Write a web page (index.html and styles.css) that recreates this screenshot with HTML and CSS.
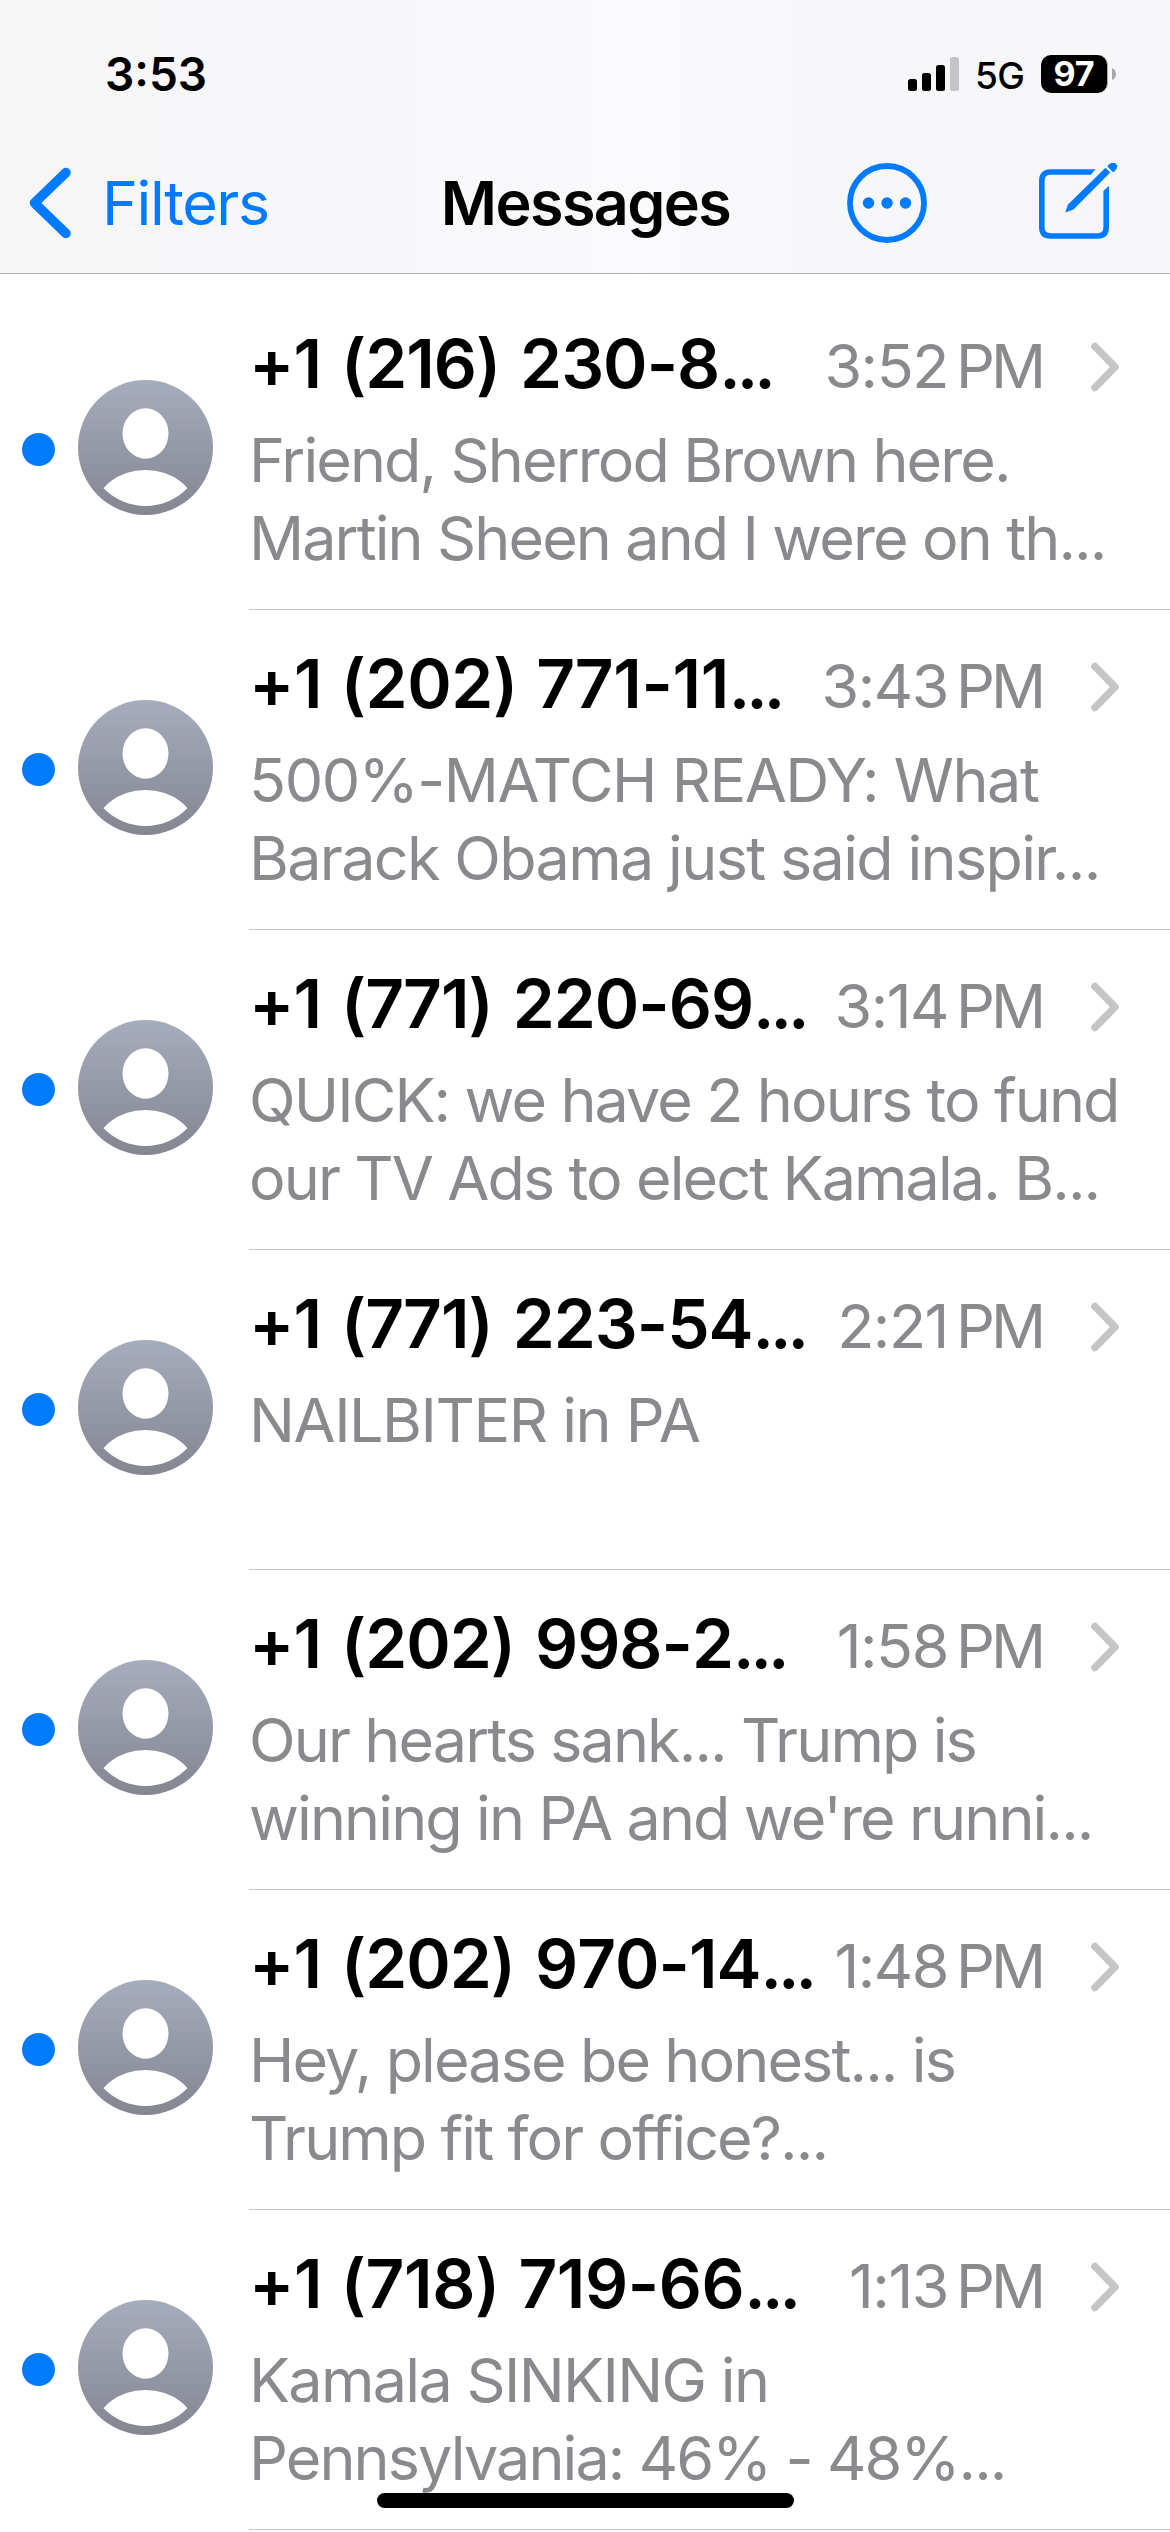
FILE: index.html
```html
<!DOCTYPE html>
<html lang="en">
<head>
  <meta charset="UTF-8" />
  <meta name="viewport" content="width=device-width, initial-scale=1.0">
  <title>Messages</title>
  <link rel="stylesheet" href="styles.css">
</head>
<body>
  <!-- shared shapes -->
  <svg class="defs" width="0" height="0">
    <defs>
      <linearGradient id="avatarFill" x1="0" y1="0" x2="0" y2="1">
        <stop offset="0" stop-color="#a6adbc" />
        <stop offset="1" stop-color="#848691" />
      </linearGradient>
      <clipPath id="avatarClip"><circle cx="67.5" cy="67.5" r="58.5" /></clipPath>
      <symbol id="avatar" viewBox="0 0 135 135">
        <circle cx="67.5" cy="67.5" r="67.5" fill="url(#avatarFill)" />
        <ellipse cx="67.5" cy="53.5" rx="23" ry="25.2" fill="#fff" />
        <ellipse cx="67.5" cy="130" rx="50" ry="40" fill="#fff" clip-path="url(#avatarClip)" />
      </symbol>
      <symbol id="chevron" viewBox="0 0 30 50">
        <path d="M5 4.5 L25 25 L5 45.5" fill="none" stroke="#c5c5c7" stroke-width="7.5" stroke-linecap="round" stroke-linejoin="round" />
      </symbol>
    </defs>
  </svg>

  <header class="header">
    <div class="status-bar">
      <span class="clock">3:53</span>
      <div class="status-right">
        <svg class="signal" width="51" height="34" viewBox="0 0 51 34">
          <rect x="0" y="22" width="9" height="12" rx="2.5" />
          <rect x="14" y="16" width="9" height="18" rx="2.5" />
          <rect x="28" y="8" width="9" height="26" rx="2.5" />
          <rect x="42" y="0" width="9" height="34" rx="2.5" fill="#c4c4c7" />
        </svg>
        <span class="network">5G</span>
        <div class="battery">97</div>
        <svg class="battery-tip" width="4" height="12" viewBox="0 0 4 12">
          <path d="M0 0 Q4 2 4 6 Q4 10 0 12 Z" fill="#a9a9ac" />
        </svg>
      </div>
    </div>
    <nav class="nav-bar">
      <a class="back">
        <svg width="42" height="72" viewBox="0 0 42 72">
          <path d="M37 5.5 L5.5 36 L37 66.5" fill="none" stroke="#007aff" stroke-width="9.5" stroke-linecap="round" stroke-linejoin="round" />
        </svg>
        <span>Filters</span>
      </a>
      <h1 class="title">Messages</h1>
      <div class="actions">
        <svg width="80" height="80" viewBox="0 0 80 80">
          <circle cx="40" cy="40" r="37" fill="none" stroke="#007aff" stroke-width="5.8" />
          <circle cx="21.5" cy="40" r="5.7" fill="#007aff" />
          <circle cx="40" cy="40" r="5.7" fill="#007aff" />
          <circle cx="58.5" cy="40" r="5.7" fill="#007aff" />
        </svg>
        <svg width="80" height="80" viewBox="0 0 80 80">
          <path d="M58 9 H11.5 Q2.8 9 2.8 17.7 V64.3 Q2.8 73 11.5 73 H58.5 Q67.2 73 67.2 64.3 V18" fill="none" stroke="#007aff" stroke-width="5.6" />
          <path d="M62 0 L80 14 L62 30 L48 16 Z" fill="#f7f7f9" />
          <path d="M26.2 49.5 L29 41.4 L66.5 4.8 L71.2 9.5 L34.5 46.4 Z" fill="#007aff" />
          <path d="M69.3 2.1 Q73.8 -2.2 77.2 0.9 Q79.8 4 75.8 8 L74 9.3 L68.3 3.3 Z" fill="#007aff" />
        </svg>
      </div>
    </nav>
  </header>

  <main class="list">
    <div class="row">
      <span class="unread"></span>
      <svg class="avatar"><use href="#avatar" /></svg>
      <div class="content">
        <div class="top">
          <span class="name">+1 (216) 230-8<span class="dots">...</span></span>
          <span class="time">3:52<span class="pm">PM</span></span>
          <svg class="chevron"><use href="#chevron" /></svg>
        </div>
        <p class="preview">Friend, Sherrod Brown here.<br>Martin Sheen and I were on th...</p>
      </div>
    </div>
    <div class="row">
      <span class="unread"></span>
      <svg class="avatar"><use href="#avatar" /></svg>
      <div class="content">
        <div class="top">
          <span class="name wide">+1 (202) 771-11<span class="dots">...</span></span>
          <span class="time">3:43<span class="pm">PM</span></span>
          <svg class="chevron"><use href="#chevron" /></svg>
        </div>
        <p class="preview"><span class="caps">500%-MATCH READY: What</span><br><span class="loose">Barack Obama just said inspir...</span></p>
      </div>
    </div>
    <div class="row">
      <span class="unread"></span>
      <svg class="avatar"><use href="#avatar" /></svg>
      <div class="content">
        <div class="top">
          <span class="name">+1 (771) 220-69<span class="dots">...</span></span>
          <span class="time">3:14<span class="pm">PM</span></span>
          <svg class="chevron"><use href="#chevron" /></svg>
        </div>
        <p class="preview">QUICK: we have 2 hours to fund<br>our TV Ads to elect Kamala. B...</p>
      </div>
    </div>
    <div class="row">
      <span class="unread"></span>
      <svg class="avatar"><use href="#avatar" /></svg>
      <div class="content">
        <div class="top">
          <span class="name">+1 (771) 223-54<span class="dots">...</span></span>
          <span class="time">2:21<span class="pm">PM</span></span>
          <svg class="chevron"><use href="#chevron" /></svg>
        </div>
        <p class="preview"><span class="caps">NAILBITER in PA</span></p>
      </div>
    </div>
    <div class="row">
      <span class="unread"></span>
      <svg class="avatar"><use href="#avatar" /></svg>
      <div class="content">
        <div class="top">
          <span class="name">+1 (202) 998-2<span class="dots">...</span></span>
          <span class="time">1:58<span class="pm">PM</span></span>
          <svg class="chevron"><use href="#chevron" /></svg>
        </div>
        <p class="preview">Our hearts sank... Trump is<br>winning in PA and we're runni...</p>
      </div>
    </div>
    <div class="row">
      <span class="unread"></span>
      <svg class="avatar"><use href="#avatar" /></svg>
      <div class="content">
        <div class="top">
          <span class="name">+1 (202) 970-14<span class="dots">...</span></span>
          <span class="time">1:48<span class="pm">PM</span></span>
          <svg class="chevron"><use href="#chevron" /></svg>
        </div>
        <p class="preview">Hey, please be honest... is<br>Trump fit for office?...</p>
      </div>
    </div>
    <div class="row">
      <span class="unread"></span>
      <svg class="avatar"><use href="#avatar" /></svg>
      <div class="content">
        <div class="top">
          <span class="name wide">+1 (718) 719-66<span class="dots">...</span></span>
          <span class="time">1:13<span class="pm">PM</span></span>
          <svg class="chevron"><use href="#chevron" /></svg>
        </div>
        <p class="preview"><span class="loose">Kamala SINKING in</span><br>Pennsylvania: 46% - 48%...</p>
      </div>
    </div>
  </main>
  <div class="home-indicator"></div>
</body>
</html>
```
FILE: styles.css
```css
* { box-sizing: border-box; }
body {
  margin: 0;
  width: 1170px;
  height: 2532px;
  overflow: hidden;
  background: #fff;
  color: #000;
  font-family: Inter, "Liberation Sans", sans-serif;
}
svg { display: block; flex: none; }
.defs { position: absolute; }

.header {
  height: 274px;
  background: linear-gradient(90deg, #f6f6f7, #f7f7fa 30%, #fafafc 55%, #f7f7f9 72%, #f6f6f8);
  border-bottom: 1px solid #b2b2b4;
}
.status-bar {
  height: 148px;
  padding: 0 54px 0 105px;
  display: flex;
  justify-content: space-between;
  align-items: center;
}
.clock {
  font-size: 46px;
  font-weight: 600;
}
.status-right { display: flex; align-items: center; }
.network {
  margin-left: 16px;
  width: 66px;
  font-size: 37px;
  font-weight: 500;
  letter-spacing: -0.5px;
  line-height: 38px;
  padding-top: 4px;
}
.battery {
  width: 67px;
  height: 38px;
  border-radius: 10px;
  background: #000;
  border-right: 1px solid #a9a9ac;
  color: #fff;
  font-size: 34px;
  font-weight: 700;
  line-height: 38px;
  text-align: center;
}
.battery-tip { margin-left: 4px; }

.nav-bar {
  height: 110px;
  padding: 0 51px 0 29px;
  display: grid;
  grid-template-columns: 1fr auto 1fr;
  align-items: center;
}
.back {
  display: flex;
  align-items: center;
  gap: 31px;
  color: #007aff;
  font-size: 61px;
  letter-spacing: -1.4px;
}
.title {
  margin: 0 0 0 23px;
  font-size: 61px;
  font-weight: 600;
  letter-spacing: -1.6px;
}
.actions {
  display: flex;
  justify-content: flex-end;
  gap: 112px;
}

.list { padding-top: 16px; }
.row {
  height: 320px;
  display: flex;
}
.unread {
  flex: none;
  width: 33px;
  height: 33px;
  margin: 143px 23px 0 22px;
  border-radius: 50%;
  background: #007aff;
}
.avatar {
  width: 135px;
  height: 135px;
  margin: 90px 36px 0 0;
}
.content {
  flex: 1;
  height: 320px;
  padding-top: 34px;
  border-bottom: 1px solid #c6c6c8;
}
.top {
  display: flex;
  align-items: baseline;
  height: 97px;
  line-height: 80px;
  padding-right: 50px;
}
.name {
  flex: 1;
  white-space: nowrap;
  font-size: 67.5px;
  font-weight: 600;
  font-kerning: none;
  letter-spacing: -1px;
  word-spacing: 4px;
}
.name.wide {
  letter-spacing: -0.4px;
  word-spacing: 2px;
}
.name .dots { letter-spacing: -4px; }
.time {
  font-size: 61px;
  letter-spacing: -1.5px;
  color: #8a8a8e;
}
.pm {
  margin-left: 8px;
  letter-spacing: -4px;
}
.chevron {
  align-self: flex-start;
  width: 30px;
  height: 50px;
  margin: 18px 0 0 48px;
}
.preview {
  margin: 0;
  font-size: 61px;
  line-height: 78px;
  letter-spacing: -1.88px;
  white-space: nowrap;
  color: #8a8a8e;
}
.preview .caps { letter-spacing: -1.45px; }
.preview .loose { letter-spacing: -1.65px; }

.home-indicator {
  position: absolute;
  left: 377px;
  top: 2493px;
  width: 417px;
  height: 15px;
  border-radius: 8px;
  background: #000;
}
```
